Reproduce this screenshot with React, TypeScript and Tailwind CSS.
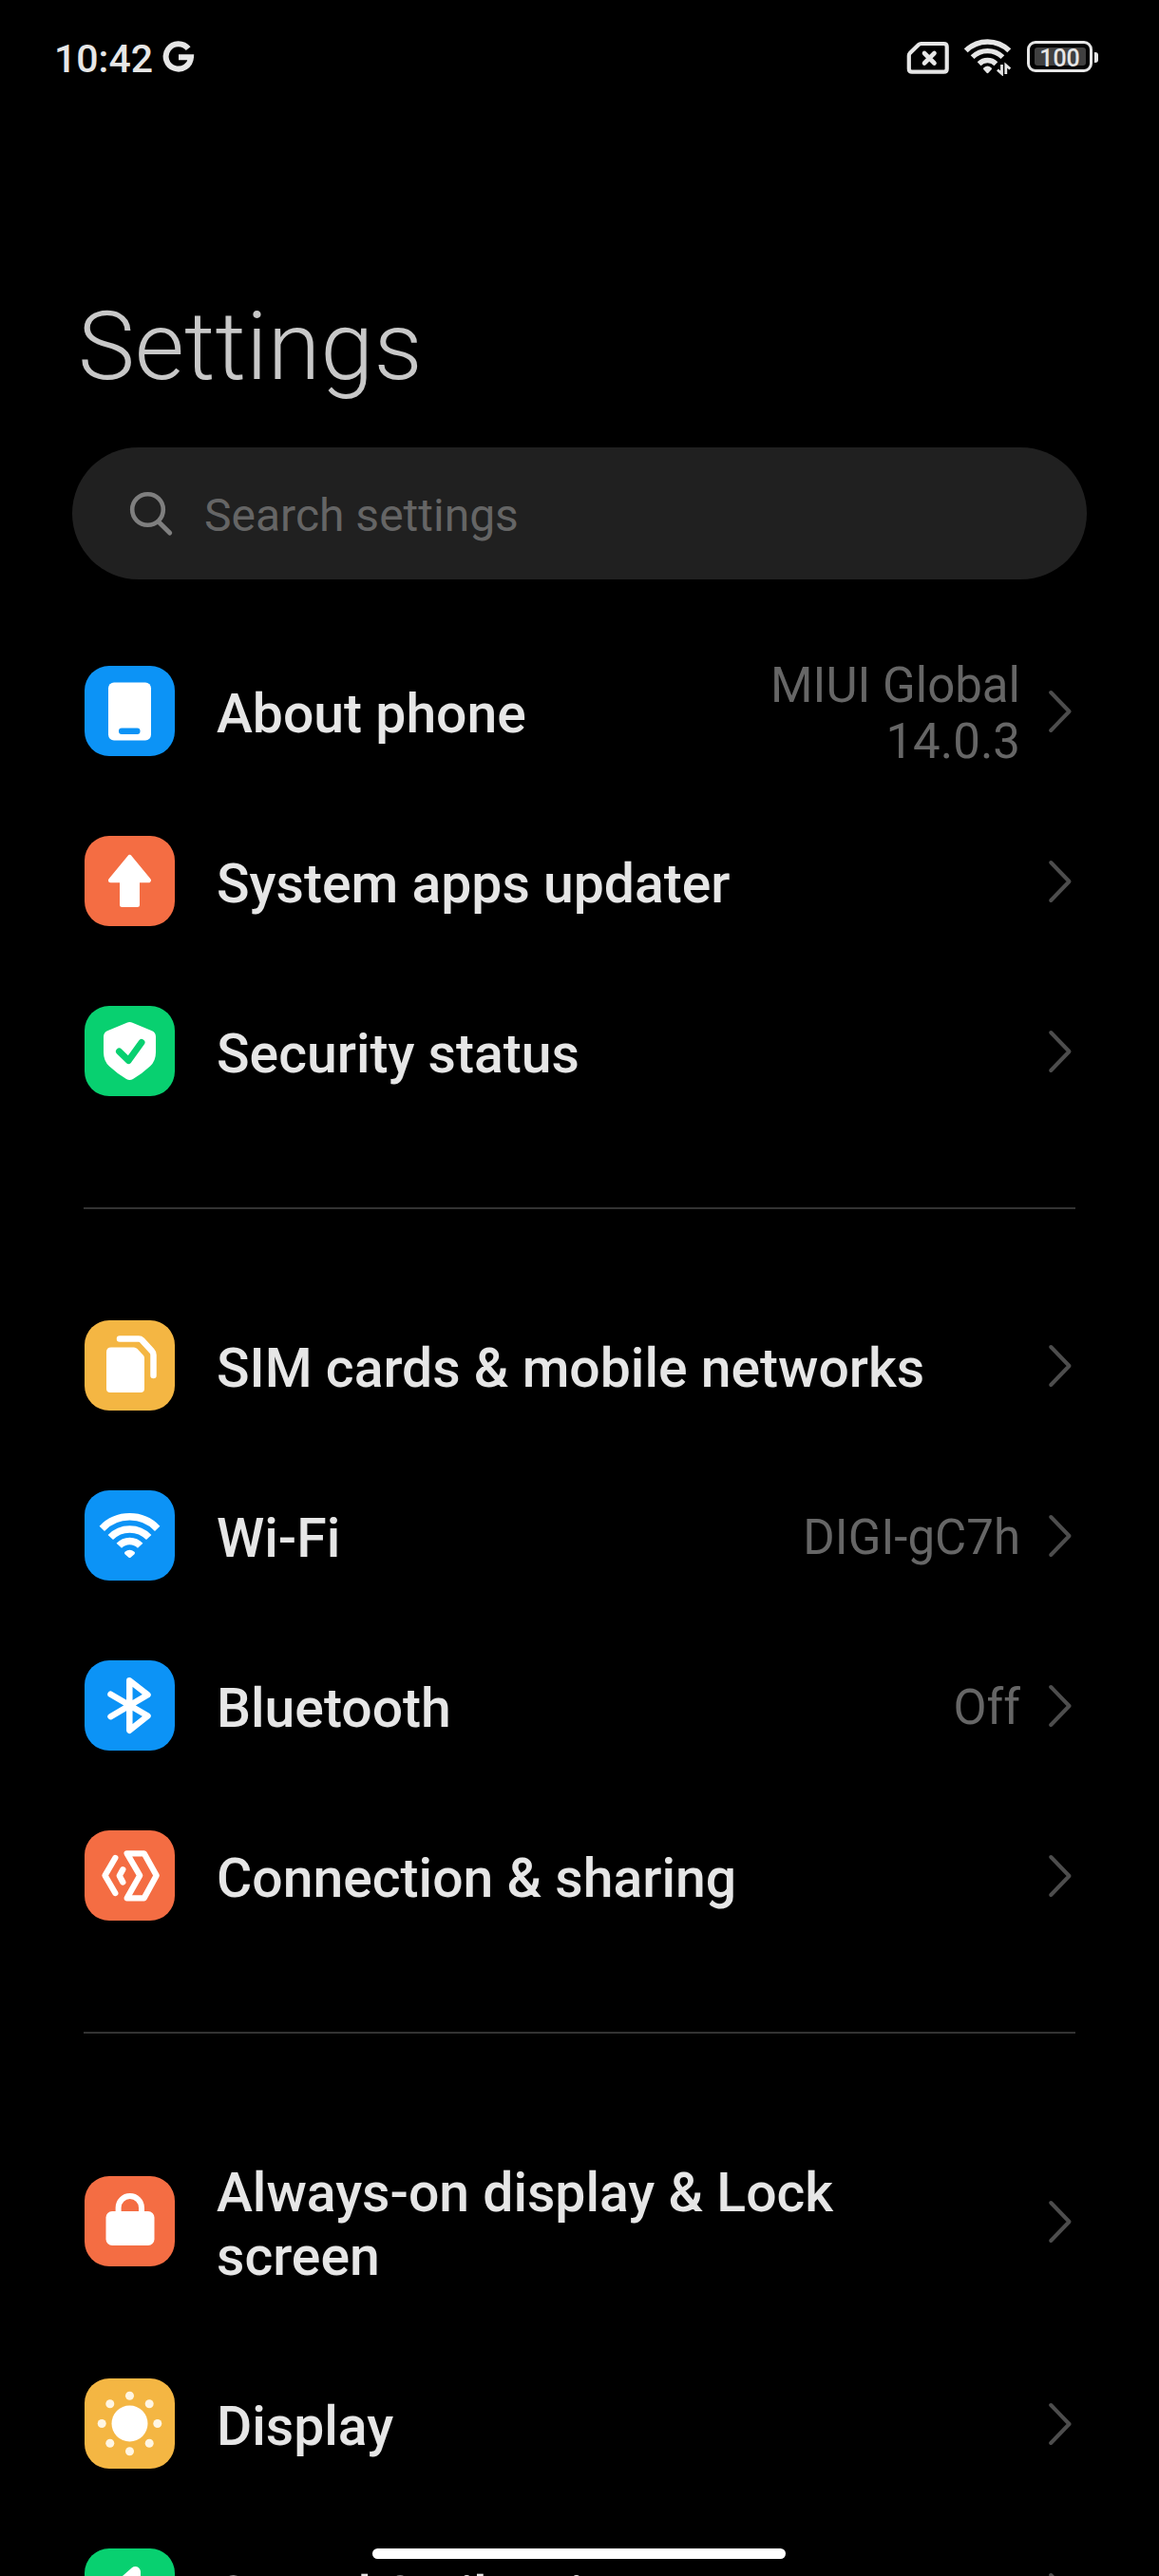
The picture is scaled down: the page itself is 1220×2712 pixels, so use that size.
import type { ReactNode } from "react";

type Item = {
  label: string;
  value?: string;
  color: string;
  icon: ReactNode;
  tall?: boolean;
};

const phoneIcon = (
  <>
    <rect x="25" y="17.5" width="45" height="61" rx="6" fill="#fff" />
    <rect x="36" y="65.5" width="22.5" height="6.5" rx="3" fill="#0c93f6" />
  </>
);

const arrowIcon = (
  <path
    d="M47.5 22.5 67.5 46.8 H55.5 V72.5 H39.5 V46.8 H27.5 Z"
    fill="#fff"
    stroke="#fff"
    strokeWidth="5"
    strokeLinejoin="round"
  />
);

const shieldIcon = (
  <>
    <path
      d="M44.5 17.8 Q47.5 16.4 50.5 17.8 L71 26.2 Q75 28 75 32.5 V49 Q75 58 69 63.5 Q61 71 51 77 Q47.5 79 44 77 Q34 71 26 63.5 Q20 58 20 49 V32.5 Q20 28 24 26.2 Z"
      fill="#fff"
    />
    <path
      d="M36.5 48 46.3 57.5 60 38.5"
      fill="none"
      stroke="#08d070"
      strokeWidth="7"
      strokeLinecap="round"
      strokeLinejoin="round"
    />
  </>
);

const simIcon = (
  <>
    <path
      d="M28 28.5 H52 Q54 28.5 55.5 30 L62 37 Q63 38.2 63 40 V72 Q63 76 59 76 H27 Q23 76 23 72 V33.5 Q23 28.5 28 28.5 Z"
      fill="#fff"
    />
    <path
      d="M37 19.5 H57 Q59 19.5 60.5 21 L71 32.5 Q72.5 34 72.5 36.5 V58"
      fill="none"
      stroke="#fff"
      strokeWidth="6.5"
      strokeLinecap="round"
    />
  </>
);

const wifiIcon = (
  <g fill="none" stroke="#fff" strokeWidth="7.5">
    <path d="M18.3 40.3 A40.5 40.5 0 0 1 76.7 40.3" />
    <path d="M27.3 49.5 A28 28 0 0 1 67.7 49.5" />
    <path d="M36.3 58.3 A15.4 15.4 0 0 1 58.7 58.3" />
    <path
      d="M43.5 66 Q47.5 62.5 51.5 66 L47.5 69.5 Z"
      fill="#fff"
      strokeWidth="3"
      strokeLinejoin="round"
    />
  </g>
);

const bluetoothIcon = (
  <path
    d="M27.5 35.7 66.5 58.5 47.3 73.7 V21.2 L66.5 36.3 27.5 59.2"
    fill="none"
    stroke="#fff"
    strokeWidth="6.5"
    strokeLinecap="round"
    strokeLinejoin="round"
  />
);

const sharingIcon = (
  <g fill="none" stroke="#fff" strokeWidth="6.3" strokeLinecap="round" strokeLinejoin="round">
    <path d="M32.3 29 21.5 47.5 32.3 66" />
    <path d="M40.3 41.3 36.7 47.8 40.3 54.5" />
    <path d="M44.7 24.3 H62.7 L75.7 47.5 62.7 71.3 H44.7 L58.2 47.5 Z" />
  </g>
);

const lockIcon = (
  <>
    <rect x="22.5" y="37" width="51" height="36" rx="6.5" fill="#fff" />
    <path d="M35.6 40 V33.3 A12.2 12.2 0 0 1 60 33.3 V40" fill="none" stroke="#fff" strokeWidth="6" />
  </>
);

const sunIcon = (
  <>
    <circle cx="47.5" cy="47.5" r="19" fill="#fff" />
    <g fill="#fff6e3">
      <circle cx="47.5" cy="18.2" r="4.5" />
      <circle cx="68.2" cy="26.8" r="4.5" />
      <circle cx="76.8" cy="47.5" r="4.5" />
      <circle cx="68.2" cy="68.2" r="4.5" />
      <circle cx="47.5" cy="76.8" r="4.5" />
      <circle cx="26.8" cy="68.2" r="4.5" />
      <circle cx="18.2" cy="47.5" r="4.5" />
      <circle cx="26.8" cy="26.8" r="4.5" />
    </g>
  </>
);

const soundIcon = (
  <path
    d="M53.5 24.5 V70 L38 57 H27 V38 H38 Z"
    fill="#fff"
    stroke="#fff"
    strokeWidth="11"
    strokeLinejoin="round"
  />
);

const groups: Item[][] = [
  [
    { label: "About phone", value: "MIUI Global 14.0.3", color: "bg-[#0c93f6]", icon: phoneIcon },
    { label: "System apps updater", color: "bg-[#f46d43]", icon: arrowIcon },
    { label: "Security status", color: "bg-[#08d070]", icon: shieldIcon },
  ],
  [
    { label: "SIM cards & mobile networks", color: "bg-[#f4b643]", icon: simIcon },
    { label: "Wi-Fi", value: "DIGI-gC7h", color: "bg-[#0c93f6]", icon: wifiIcon },
    { label: "Bluetooth", value: "Off", color: "bg-[#0c93f6]", icon: bluetoothIcon },
    { label: "Connection & sharing", color: "bg-[#f46d43]", icon: sharingIcon },
  ],
  [
    { label: "Always-on display & Lock screen", color: "bg-[#f46d43]", icon: lockIcon, tall: true },
    { label: "Display", color: "bg-[#f4b643]", icon: sunIcon },
    { label: "Sound & vibration", color: "bg-[#08d070]", icon: soundIcon },
  ],
];

function StatusBar() {
  return (
    <header className="flex h-[120px] items-center justify-between pr-[64px] pl-[57px] text-[#e6e6e6]">
      <div className="flex items-center gap-[10px]">
        <span className="pt-[3px] text-[41px] leading-[48px] font-medium">10:42</span>
        <svg width="34" height="34" viewBox="0 0 34 34" fill="none" className="mb-px">
          <path d="M27.2 8.2 A13.2 13.2 0 1 0 30 17.2 H17" stroke="currentColor" strokeWidth="6" />
        </svg>
      </div>
      <div className="flex items-center">
        <svg width="46" height="36" viewBox="0 0 46 36" fill="none" stroke="currentColor" className="mt-[2px]">
          <path
            d="M15.5 3 H39.5 Q42.7 3 42.7 6.2 V29.5 Q42.7 32.7 39.5 32.7 H6 Q2.8 32.7 2.8 29.5 V15.5 Q2.8 14 4 12.8 L13 4 Q14 3 15.5 3 Z"
            strokeWidth="4.2"
          />
          <path d="M19 13 29.5 23.5 M29.5 13 19 23.5" strokeWidth="4.6" strokeLinecap="round" />
        </svg>
        <svg width="52" height="40" viewBox="0 0 52 40" fill="none" stroke="currentColor" className="ml-[14px]">
          <path d="M2.7 13.3 A32.5 32.5 0 0 1 48.3 13.3" strokeWidth="5.6" />
          <path d="M9.6 20.2 A22.6 22.6 0 0 1 41.4 20.2" strokeWidth="5.4" />
          <path d="M16.6 27.2 A12.7 12.7 0 0 1 34.4 27.2" strokeWidth="5.4" />
          <path
            d="M22.5 32.3 Q25.5 29.8 28.5 32.3 L25.5 35.6 Z"
            fill="currentColor"
            strokeWidth="3"
            strokeLinejoin="round"
          />
          <path d="M40.5 28 V37.5 L36 33.5 M44.8 38 V28.5 L49.3 32.5" strokeWidth="2.8" />
        </svg>
        <div className="mb-px ml-[15px] flex h-[33px] w-[69px] items-center justify-center rounded-[9px] border-[3px] border-[#e6e6e6]">
          <div className="flex h-[19px] w-[54px] items-center justify-center rounded-[3px] bg-[#404040] pt-[3px] text-[25px] leading-none font-medium">
            100
          </div>
        </div>
        <div className="ml-[2px] h-[11px] w-1 rounded-r-[3px] bg-[#e6e6e6]" />
      </div>
    </header>
  );
}

function SearchBar() {
  return (
    <div className="mx-[76px] flex h-[139px] items-center rounded-full bg-[#202020] pl-[60px]">
      <svg width="48" height="48" viewBox="0 0 48 48" fill="none" stroke="#7f7f7f">
        <circle cx="19.5" cy="19.5" r="16.3" strokeWidth="4.6" />
        <path d="M31 32.5 42.7 44" strokeWidth="5" strokeLinecap="round" />
      </svg>
      <span className="ml-[31px] pt-1 text-[48px] leading-[56px] text-[#656565]">Search settings</span>
    </div>
  );
}

function Row({ item }: { item: Item }) {
  return (
    <li className={`flex items-center pr-[91px] pl-[89px] ${item.tall ? "h-[246px] pb-px" : "h-[179px]"}`}>
      <svg viewBox="0 0 95 95" className={`size-[95px] shrink-0 rounded-[26px] ${item.color}`}>
        {item.icon}
      </svg>
      <span className="ml-[44px] max-w-[760px] pt-[6px] text-[57.1px] leading-[67px] font-medium text-[#e6e6e6]">
        {item.label}
      </span>
      {item.value && (
        <span className="ml-auto max-w-[290px] pt-1 text-right text-[51px] leading-[59px] text-[#666]">
          {item.value}
        </span>
      )}
      <svg
        width="26"
        height="46"
        viewBox="0 0 26 46"
        fill="none"
        className={item.value ? "ml-[29px] shrink-0" : "ml-auto shrink-0"}
      >
        <path
          d="M3.2 3 22.5 23 3.2 43"
          stroke="#4d4d4d"
          strokeWidth="4"
          strokeLinecap="round"
          strokeLinejoin="round"
        />
      </svg>
    </li>
  );
}

export default function App() {
  return (
    <div className="relative h-[2712px] w-[1220px] overflow-hidden bg-black font-['Roboto',sans-serif]">
      <StatusBar />
      <h1 className="mt-[186px] mb-[47px] ml-[82px] text-[101px] leading-[118px] font-light text-[#c8c8c8]">
        Settings
      </h1>
      <SearchBar />
      <main className="mt-[49px]">
        {groups.map((items, index) => (
          <section key={index}>
            {index > 0 && <hr className="mx-[88px] my-[75px] border-t-2 border-[#333]" />}
            <ul>
              {items.map((item) => (
                <Row key={item.label} item={item} />
              ))}
            </ul>
          </section>
        ))}
      </main>
      {/* gesture bar floats over the list */}
      <div className="absolute bottom-[18px] left-[392px] h-[11px] w-[435px] rounded-full bg-white" />
    </div>
  );
}
